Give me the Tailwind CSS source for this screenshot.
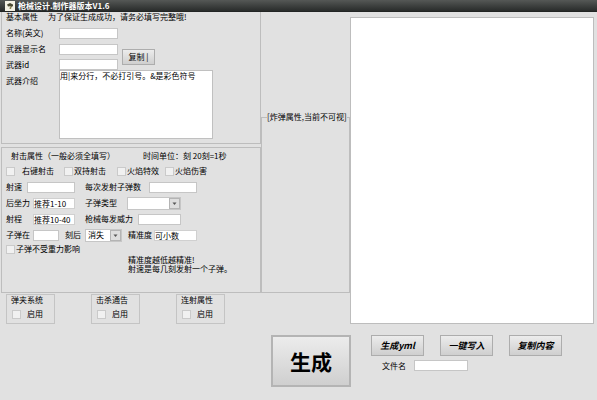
<!DOCTYPE html>
<html lang="zh-CN">
<head>
    <meta charset="UTF-8">
    <meta name="viewport" content="width=device-width, initial-scale=1.0">
    <title>枪械设计.制作器版本V1.6</title>
    <script src="https://cdn.jsdelivr.net/npm/@tailwindcss/browser@4"></script>
</head>
<body class="min-h-screen bg-[#e1e1e1] font-['Noto_Sans_CJK_SC',sans-serif] text-[8px] leading-[10px] text-black">
    <!-- 标题栏 -->
    <header class="flex h-3 items-center gap-[3px] border-b border-[#222524] bg-linear-to-b from-[#555856] to-[#292c2b] pl-[5px] text-white">
        <svg class="size-[10px]" viewBox="0 0 10 10" aria-hidden="true">
            <rect width="10" height="10" fill="#f4f1e4"/>
            <path d="M2 3.500 5 2l3 1.500v1.500L6.500 6 5 5.200 3 5.500z" fill="#4b4a33"/>
            <path d="M5 5.500h1.800L6 8H4.500z" fill="#8a8454"/>
        </svg>
        <h1 class="font-bold">枪械设计.制作器版本V1.6</h1>
    </header>

    <main class="flex whitespace-nowrap pl-px">
        <div class="w-[260px] shrink-0">
            <!-- 基本属性 -->
            <section class="mb-[3px] border-x border-b border-[#bdbdbd] pb-1 pl-1">
                <div class="mb-[3px] flex gap-[10px]">
                    <h2>基本属性</h2>
                    <p>为了保证生成成功，请务必填写完整哦!</p>
                </div>
                <div class="flex">
                    <div>
                        <div class="flex h-4 items-center">
                            <label for="name" class="w-[53px]">名称(英文)</label>
                            <input id="name" type="text" class="h-[11px] w-[59px] border border-[#c6c6c6] bg-white px-0.5">
                        </div>
                        <div class="flex h-4 items-center">
                            <label for="display" class="w-[53px]">武器显示名</label>
                            <input id="display" type="text" class="h-[11px] w-[59px] border border-[#c6c6c6] bg-white px-0.5">
                        </div>
                        <div class="flex h-[13px] items-end">
                            <label for="wid" class="w-[53px]">武器id</label>
                            <input id="wid" type="text" class="h-[11px] w-[59px] border border-[#c6c6c6] bg-white px-0.5">
                        </div>
                    </div>
                    <button type="button" class="mt-6 ml-1 h-4 w-[33px] border border-[#adadad] bg-linear-to-b from-[#ececec] to-[#cfcfcf]">复制 |</button>
                </div>
                <div class="flex">
                    <label for="intro" class="w-[53px] pt-[6px]">武器介绍</label>
                    <textarea id="intro" class="h-[69px] w-[154px] resize-none border border-[#c0c0c0] bg-white">用|来分行，不必打引号。&amp;是彩色符号</textarea>
                </div>
            </section>

            <!-- 射击属性 -->
            <section class="h-[146px] border border-[#bdbdbd] pl-1">
                <div class="flex h-[15px] items-center pl-[5px]">
                    <h2 class="w-[132px]">射击属性（一般必须全填写）</h2>
                    <p>时间单位：刻 20刻=1秒</p>
                </div>
                <div class="flex h-4 items-center">
                    <label class="flex w-[58px] items-center gap-[7px]"><input type="checkbox" class="size-[9px] appearance-none border border-[#cacaca] bg-[#f1f1f1] checked:bg-[#666]">右键射击</label>
                    <label class="flex w-[53px] items-center gap-px"><input type="checkbox" class="size-[9px] appearance-none border border-[#cacaca] bg-[#f1f1f1] checked:bg-[#666]">双持射击</label>
                    <label class="flex w-12 items-center gap-px"><input type="checkbox" class="size-[9px] appearance-none border border-[#cacaca] bg-[#f1f1f1] checked:bg-[#666]">火焰特效</label>
                    <label class="flex items-center gap-px"><input type="checkbox" class="size-[9px] appearance-none border border-[#cacaca] bg-[#f1f1f1] checked:bg-[#666]">火焰伤害</label>
                </div>
                <div class="flex h-4 items-center">
                    <label for="speed" class="w-[21px]">射速</label>
                    <input id="speed" type="text" class="mr-[10px] h-[11px] w-12 border border-[#c6c6c6] bg-white px-0.5">
                    <label for="count" class="w-16">每次发射子弹数</label>
                    <input id="count" type="text" class="h-[11px] w-12 border border-[#c6c6c6] bg-white px-0.5">
                </div>
                <div class="flex h-4 items-center">
                    <label for="recoil" class="w-[27px]">后坐力</label>
                    <input id="recoil" type="text" value="推荐1-10" class="mr-[10px] h-[11px] w-[42px] border border-[#d0d0d0] bg-white">
                    <label for="kind" class="w-[42px]">子弹类型</label>
                    <div class="relative">
                        <select id="kind" class="block h-[13px] w-[54px] appearance-none border border-[#c6c6c6] bg-white pl-0.5">
                            <option></option>
                        </select>
                        <svg class="pointer-events-none absolute top-px right-px h-[11px] w-[11px]" viewBox="0 0 11 11" aria-hidden="true">
                            <rect x=".5" y=".5" width="10" height="10" fill="#dedede" stroke="#b4b4b4"/>
                            <path d="M3.500 4.500h4L5.500 7z" fill="#555"/>
                        </svg>
                    </div>
                </div>
                <div class="flex h-4 items-center">
                    <label for="range" class="w-[27px]">射程</label>
                    <input id="range" type="text" value="推荐10-40" class="mr-[10px] h-[11px] w-[42px] border border-[#d0d0d0] bg-white">
                    <label for="power" class="w-[53px]">枪械每发威力</label>
                    <input id="power" type="text" class="h-[11px] w-[43px] border border-[#c6c6c6] bg-white px-0.5">
                </div>
                <div class="flex h-4 items-center">
                    <label for="ticks" class="w-[27px]">子弹在</label>
                    <input id="ticks" type="text" class="mr-[6px] h-[11px] w-[26px] border border-[#c6c6c6] bg-white px-0.5">
                    <label for="after" class="w-5">刻后</label>
                    <div class="relative mr-[6px]">
                        <select id="after" class="block h-[13px] w-[37px] appearance-none border border-[#c6c6c6] bg-white pl-0.5">
                            <option>消失</option>
                        </select>
                        <svg class="pointer-events-none absolute top-px right-px h-[11px] w-[11px]" viewBox="0 0 11 11" aria-hidden="true">
                            <rect x=".5" y=".5" width="10" height="10" fill="#dedede" stroke="#b4b4b4"/>
                            <path d="M3.500 4.500h4L5.500 7z" fill="#555"/>
                        </svg>
                    </div>
                    <label for="accuracy" class="w-[26px]">精准度</label>
                    <input id="accuracy" type="text" value="可小数" class="h-[11px] w-[43px] border border-[#d0d0d0] bg-white">
                </div>
                <label class="flex h-3 items-center gap-px"><input type="checkbox" class="size-[9px] appearance-none border border-[#cacaca] bg-[#f1f1f1] checked:bg-[#666]">子弹不受重力影响</label>
                <p class="pl-[122px] leading-[9px]">精准度越低越精准!<br>射速是每几刻发射一个子弹。</p>
            </section>

            <!-- 附加开关 -->
            <div class="mt-px flex gap-9 pl-[5px]">
                <section class="w-[49px] border border-[#c4c4c4] pb-1 pl-1">
                    <h2>弹夹系统</h2>
                    <label class="mt-1 flex items-center gap-[6px] pl-px"><input type="checkbox" class="size-[9px] appearance-none border border-[#cacaca] bg-[#f1f1f1] checked:bg-[#666]">启用</label>
                </section>
                <section class="w-[49px] border border-[#c4c4c4] pb-1 pl-1">
                    <h2>击杀通告</h2>
                    <label class="mt-1 flex items-center gap-[6px] pl-px"><input type="checkbox" class="size-[9px] appearance-none border border-[#cacaca] bg-[#f1f1f1] checked:bg-[#666]">启用</label>
                </section>
                <section class="w-[49px] border border-[#c4c4c4] pb-1 pl-1">
                    <h2>连射属性</h2>
                    <label class="mt-1 flex items-center gap-[6px] pl-px"><input type="checkbox" class="size-[9px] appearance-none border border-[#cacaca] bg-[#f1f1f1] checked:bg-[#666]">启用</label>
                </section>
            </div>
        </div>

        <div class="min-w-0 flex-1 pr-[3px]">
            <div class="flex items-start">
                <!-- 炸弹属性 -->
                <fieldset class="mt-[100px] h-[181px] w-[89px] border border-[#bdbdbd] pl-[5px]">
                    <legend>[炸弹属性,当前不可视]</legend>
                </fieldset>
                <textarea aria-label="生成结果" class="mt-[5px] h-[307px] min-w-0 flex-1 resize-none border border-[#bdbdbd] bg-white p-1"></textarea>
            </div>

            <div class="mt-[11px] flex pl-[10px]">
                <button type="button" class="mr-5 h-[52px] w-20 border-2 border-[#b4b4b4] bg-linear-to-b from-[#ececec] to-[#cfcfcf] text-[21px] font-bold">生成</button>
                <div>
                    <div class="flex gap-4">
                        <button type="button" class="h-[21px] w-[53px] border border-[#adadad] bg-linear-to-b from-[#ececec] to-[#cfcfcf] text-[9px] font-bold italic">生成yml</button>
                        <button type="button" class="h-[21px] w-[53px] border border-[#adadad] bg-linear-to-b from-[#ececec] to-[#cfcfcf] text-[9px] font-bold italic">一键写入</button>
                        <button type="button" class="h-[21px] w-[53px] border border-[#adadad] bg-linear-to-b from-[#ececec] to-[#cfcfcf] text-[9px] font-bold italic">复制内容</button>
                    </div>
                    <div class="mt-1 flex items-center pl-[11px]">
                        <label for="file" class="w-8">文件名</label>
                        <input id="file" type="text" class="h-[11px] w-[54px] border border-[#c6c6c6] bg-white px-0.5">
                    </div>
                </div>
            </div>
        </div>
    </main>
</body>
</html>
